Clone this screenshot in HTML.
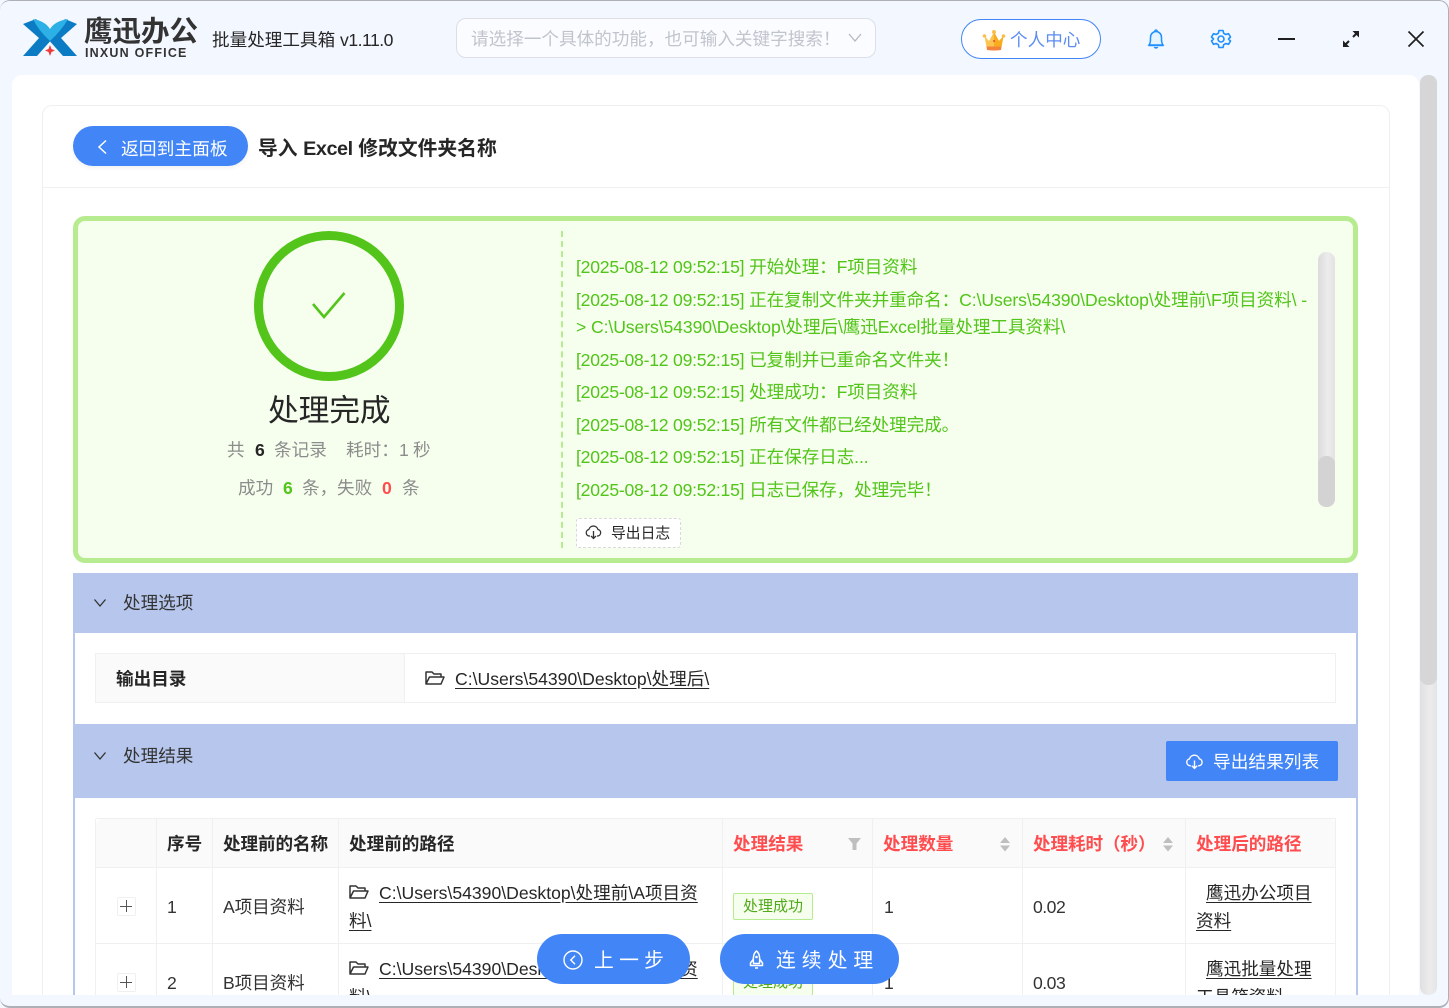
<!DOCTYPE html>
<html lang="zh-CN"><head><meta charset="utf-8"><title>鹰迅办公</title>
<style>
html,body{margin:0;padding:0;width:1449px;height:1008px;overflow:hidden;background:#f3f7ff}
body{position:relative;font-family:"Liberation Sans","Noto Sans CJK SC",sans-serif;font-size:17.6px;color:#333}
.a{position:absolute}
.t{position:absolute;white-space:nowrap;line-height:30px;height:30px}
.b{font-weight:700;color:#262626}
.r{font-weight:700;color:#ff4d4f}
.g{color:#52c41a}
.n{color:#8c8c8c}
.lg{letter-spacing:-.09px}
.lg i{font-style:normal;letter-spacing:-.23px}
.m{letter-spacing:-.5px}
u{text-underline-offset:3px}
.l{background:#f0f0f0}
</style></head><body>
<div class="a" style="left:0;top:0;width:1448px;height:1005px;border:solid #aeb0b5;border-width:1px 1px 2px 0;border-radius:10px;background:#f3f7ff"></div>

<svg class="a" style="left:20px;top:16px" width="60" height="44" viewBox="20 16 60 44">
<path d="M23 24 L36 19 L53 38 L37 56 L23 56 L39 38Z" fill="#0b7cc4"/>
<path d="M77 24 L65 19 L47 38 L63 56 L77 56 L61 38Z" fill="#0b7cc4"/>
<path d="M33 19 Q45 21 50 29 Q55 21 68 19 Q62 30 50 41 Q38 30 33 19Z" fill="#2cb0e6"/>
<path d="M50 45 L51.5 49 L55 50.500 L51.500 52 L50 56 L48.500 52 L45 50.500 L48.500 49Z" fill="#ee3b3b"/>
</svg>
<div class="t" style="left:84px;top:17px;font-size:28.500px;font-weight:700;color:#333">鹰迅办公</div>
<div class="t" style="left:85px;top:38px;font-size:12.500px;font-weight:700;color:#333;letter-spacing:1.200px">INXUN OFFICE</div>
<div class="t" style="left:212px;top:25px;color:#262626">批量处理工具箱 <span class="m">v1.11.0</span></div>

<div class="a" style="left:456px;top:18px;width:418px;height:38px;border:1px solid #dcdfe6;border-radius:10px;background:#fbfcff"></div>
<div class="t" style="left:471px;top:24px;font-size:17.600px;color:#c0c4cc">请选择一个具体的功能，也可输入关键字搜索！</div>
<svg class="a" style="left:847px;top:32px" width="16" height="12" viewBox="0 0 16 12"><path d="M2 2 L8 9 L14 2" fill="none" stroke="#b4b8c0" stroke-width="1.300"/></svg>

<div class="a" style="left:961px;top:19px;width:138px;height:38px;border:1px solid #4285f7;border-radius:20px;background:#fff"></div>
<svg class="a" style="left:982px;top:29px" width="24" height="22" viewBox="0 0 24 22">
<circle cx="12" cy="3" r="2" fill="#fbbf4d"/><circle cx="2.500" cy="7" r="1.800" fill="#fbbf4d"/><circle cx="21.500" cy="7" r="1.800" fill="#fbbf4d"/>
<path d="M2.500 7 L7 12 L12 3 L17 12 L21.500 7 L19.500 18 H4.500Z" fill="#fcc552"/><path d="M12 3 L17 12 L21.500 7 L19.500 18 H12Z" fill="#f9ad1e"/>
<path d="M4.500 17.500 H19.500 L19 21 Q12 22 5 21Z" fill="#f4823a"/><circle cx="12" cy="12" r="1" fill="#e04a3a"/></svg>
<div class="t" style="left:1010px;top:25px;color:#5b8df2">个人中心</div>
<svg class="a" style="left:1146px;top:28px" width="20" height="22" viewBox="0 0 20 22"><path d="M3 17 C4.500 15 4.500 13 4.500 9.500 C4.500 6 7 3.500 10 3.500 C13 3.500 15.500 6 15.500 9.500 C15.500 13 15.500 15 17 17Z" fill="#e6f4ff" stroke="#1e90ff" stroke-width="1.500"/><path d="M2.500 17.500 H17.500" stroke="#1e90ff" stroke-width="1.500"/><path d="M8.500 3 Q10 .8 11.500 3" fill="none" stroke="#1e90ff" stroke-width="1.300"/><path d="M8 19 Q10 21.500 12 19" fill="#1e90ff" stroke="#1e90ff"/></svg>
<svg class="a" style="left:1210px;top:28px" width="22" height="22" viewBox="0 0 22 22"><path d="M9 2.500 H13 L13.700 5.300 L15.800 6.500 L18.500 5.700 L20.500 9 L18.500 11 L20.500 13 L18.500 16.300 L15.800 15.500 L13.700 16.700 L13 19.500 H9 L8.300 16.700 L6.200 15.500 L3.500 16.300 L1.500 13 L3.500 11 L1.500 9 L3.500 5.700 L6.200 6.500 L8.300 5.300Z" fill="none" stroke="#1e90ff" stroke-width="1.600" stroke-linejoin="round"/><circle cx="11" cy="11" r="3" fill="none" stroke="#1e90ff" stroke-width="1.600"/></svg>
<div class="a" style="left:1278px;top:38px;width:17px;height:2px;background:#1f1f1f"></div>
<svg class="a" style="left:1342px;top:30px" width="18" height="18" viewBox="0 0 18 18"><path d="M3 15 L7 11 M11 7 L15 3" stroke="#1f1f1f" stroke-width="2"/><path d="M10.500 1 H17 V7.500Z M1 10.500 V17 H7.500Z" fill="#1f1f1f"/></svg>
<svg class="a" style="left:1407px;top:30px" width="18" height="18" viewBox="0 0 18 18"><path d="M1.500 1.500 L16.500 16.500 M16.500 1.500 L1.500 16.500" stroke="#1f1f1f" stroke-width="1.700"/></svg>

<div class="a" style="left:1420px;top:75px;width:17px;height:920px;border-radius:8px;background:linear-gradient(90deg,#e0e0e0,#ececec 60%,#e4e4e4)"></div>
<div class="a" style="left:1420px;top:75px;width:17px;height:610px;border-radius:8px;background:#d6d6d6"></div>

<div class="a" style="left:0;top:0;width:1449px;height:995px;overflow:hidden">
<div class="a" style="left:12px;top:75px;width:1407px;height:940px;background:#fff;border-radius:10px"></div>
<div class="a" style="left:42px;top:105px;width:1346px;height:920px;border:1px solid #efefef;border-radius:10px"></div>
<div class="a l" style="left:43px;top:187px;width:1346px;height:1px"></div>

<div class="a" style="left:73px;top:126px;width:175px;height:40px;border-radius:20px;background:#4285f7;box-shadow:0 2px 4px rgba(0,0,0,.06)"></div>
<svg class="a" style="left:96px;top:139px" width="14" height="16" viewBox="0 0 14 16"><path d="M10 1.500 L3 8 L10 14.500" fill="none" stroke="#fff" stroke-width="1.500"/></svg>
<div class="t" style="left:121px;top:134px;color:#fff;font-size:17.800px">返回到主面板</div>
<div class="t" style="left:258px;top:134px;font-size:19.800px;font-weight:700;color:#262626">导入 <span style="letter-spacing:-.4px">Excel</span> 修改文件夹名称</div>

<div class="a" style="left:73px;top:216px;width:1275px;height:337px;border:5px solid #b7eb8f;border-radius:12px;background:#f6ffed"></div>
<svg class="a" style="left:250px;top:227px" width="158" height="158" viewBox="0 0 158 158"><circle cx="79" cy="79" r="70.500" fill="none" stroke="#52c41a" stroke-width="9"/><path d="M63 77 L74 90 L94.500 66" fill="none" stroke="#52c41a" stroke-width="2.600"/></svg>
<div class="t" style="left:268px;top:396px;font-size:30.800px;color:#262626;letter-spacing:-.2px">处理完成</div>
<div class="t n" style="left:227px;top:435px">共</div><div class="t b" style="left:255px;top:435px;font-weight:700">6</div><div class="t n" style="left:274px;top:435px">条记录</div><div class="t n" style="left:346px;top:435px">耗时：</div><div class="t n" style="left:399px;top:435px">1</div><div class="t n" style="left:413px;top:435px">秒</div>
<div class="t n" style="left:238px;top:473px">成功</div><div class="t g" style="left:283px;top:473px;font-weight:700">6</div><div class="t n" style="left:302px;top:473px">条，</div><div class="t n" style="left:337px;top:473px">失败</div><div class="t" style="left:382px;top:473px;font-weight:700;color:#ff4d4f">0</div><div class="t n" style="left:402px;top:473px">条</div>

<div class="a" style="left:561px;top:231px;width:0;height:317px;border-left:2px dashed #b7eb8f"></div>
<div class="t g lg" style="left:576px;top:252px"><i>[2025-08-12 09:52:15]</i> 开始处理：F项目资料</div>
<div class="t g lg" style="left:576px;top:285px"><i>[2025-08-12 09:52:15]</i> 正在复制文件夹并重命名：C:\Users\54390\Desktop\处理前\F项目资料\ -</div>
<div class="t g lg" style="left:576px;top:312px">&gt; C:\Users\54390\Desktop\处理后\鹰迅Excel批量处理工具资料\</div>
<div class="t g lg" style="left:576px;top:345px"><i>[2025-08-12 09:52:15]</i> 已复制并已重命名文件夹！</div>
<div class="t g lg" style="left:576px;top:377px"><i>[2025-08-12 09:52:15]</i> 处理成功：F项目资料</div>
<div class="t g lg" style="left:576px;top:410px"><i>[2025-08-12 09:52:15]</i> 所有文件都已经处理完成。</div>
<div class="t g lg" style="left:576px;top:442px"><i>[2025-08-12 09:52:15]</i> 正在保存日志...</div>
<div class="t g lg" style="left:576px;top:475px"><i>[2025-08-12 09:52:15]</i> 日志已保存，处理完毕！</div>
<div class="a" style="left:576px;top:518px;width:103px;height:28px;border:1px dashed #d9d9d9;border-radius:3px;background:#fff"></div>
<svg class="a" style="left:585px;top:524px" width="17" height="16" viewBox="0 0 17 16"><path d="M5 12 H4.200 A3.300 3.300 0 0 1 3.800 5.500 A4.800 4.800 0 0 1 13 5.500 A3.300 3.300 0 0 1 12.800 12 H12" fill="none" stroke="#333" stroke-width="1.300"/><path d="M8.500 7 V14.500 M6 12 L8.500 14.500 L11 12" fill="none" stroke="#333" stroke-width="1.300"/></svg>
<div class="t" style="left:611px;top:519px;font-size:14.800px;color:#262626">导出日志</div>
<div class="a" style="left:1318px;top:252px;width:17px;height:255px;border-radius:8px;background:linear-gradient(90deg,#dcdcdc,#ececec 60%,#e2e2e2)"></div>
<div class="a" style="left:1318px;top:456px;width:17px;height:51px;border-radius:8px;background:#d3d3d3"></div>

<div class="a" style="left:73px;top:573px;width:1285px;height:430px;box-sizing:border-box;border:solid #b6c6ec;border-width:0 2px"></div>
<div class="a" style="left:73px;top:573px;width:1285px;height:60px;background:#b6c6ec"></div>
<svg class="a" style="left:93px;top:597px" width="14" height="12" viewBox="0 0 14 12"><path d="M1.500 2.500 L7 9 L12.500 2.500" fill="none" stroke="#333" stroke-width="1.300"/></svg>
<div class="t" style="left:123px;top:588px;color:#333">处理选项</div>

<div class="a" style="left:95px;top:653px;width:1239px;height:48px;border:1px solid #f0f0f0"></div>
<div class="a" style="left:96px;top:654px;width:308px;height:48px;background:#fafafa;border-right:1px solid #f0f0f0"></div>
<div class="t b" style="left:116px;top:664px">输出目录</div>
<svg class="a" style="left:424px;top:669px" width="22" height="18" viewBox="0 0 22 18"><path d="M2 15 V3 H8 L10 5 H17 V8 M2 15 L5.500 8 H20 L17 15Z" fill="none" stroke="#333" stroke-width="1.500" stroke-linejoin="round"/></svg>
<div class="t" style="left:455px;top:664px;color:#262626"><u>C:\Users\54390\Desktop\处理后\</u></div>

<div class="a" style="left:73px;top:724px;width:1285px;height:74px;background:#b6c6ec"></div>
<svg class="a" style="left:93px;top:750px" width="14" height="12" viewBox="0 0 14 12"><path d="M1.500 2.500 L7 9 L12.500 2.500" fill="none" stroke="#333" stroke-width="1.300"/></svg>
<div class="t" style="left:123px;top:741px;color:#333">处理结果</div>
<div class="a" style="left:1166px;top:741px;width:172px;height:40px;background:#4285f7;border-radius:2px"></div>
<svg class="a" style="left:1185px;top:753px" width="19" height="17" viewBox="0 0 17 16"><path d="M5 12 H4.200 A3.300 3.300 0 0 1 3.800 5.500 A4.800 4.800 0 0 1 13 5.500 A3.300 3.300 0 0 1 12.800 12 H12" fill="none" stroke="#fff" stroke-width="1.300"/><path d="M8.500 7 V14.500 M6 12 L8.500 14.500 L11 12" fill="none" stroke="#fff" stroke-width="1.300"/></svg>
<div class="t" style="left:1213px;top:747px;color:#fff;font-size:17.700px">导出结果列表</div>

<div class="a" style="left:96px;top:819px;width:1240px;height:48px;background:#fafafa;border-radius:6px 6px 0 0"></div>
<div class="a l" style="left:96px;top:818px;width:1240px;height:1px"></div>
<div class="a l" style="left:96px;top:867px;width:1240px;height:1px"></div>
<div class="a l" style="left:96px;top:943px;width:1240px;height:1px"></div>
<div class="a l" style="left:95px;top:819px;width:1px;height:180px"></div>
<div class="a l" style="left:156px;top:819px;width:1px;height:180px"></div>
<div class="a l" style="left:212px;top:819px;width:1px;height:180px"></div>
<div class="a l" style="left:338px;top:819px;width:1px;height:180px"></div>
<div class="a l" style="left:722px;top:819px;width:1px;height:180px"></div>
<div class="a l" style="left:872px;top:819px;width:1px;height:180px"></div>
<div class="a l" style="left:1022px;top:819px;width:1px;height:180px"></div>
<div class="a l" style="left:1185px;top:819px;width:1px;height:180px"></div>
<div class="a l" style="left:1335px;top:819px;width:1px;height:180px"></div>

<div class="t b" style="left:167px;top:829px">序号</div>
<div class="t b" style="left:223px;top:829px;letter-spacing:-.1px">处理前的名称</div>
<div class="t b" style="left:349px;top:829px">处理前的路径</div>
<div class="t r" style="left:733px;top:829px">处理结果</div>
<div class="t r" style="left:883px;top:829px">处理数量</div>
<div class="t r" style="left:1033px;top:829px;letter-spacing:-.1px">处理耗时（秒）</div>
<div class="t r" style="left:1196px;top:829px">处理后的路径</div>
<svg class="a" style="left:847px;top:837px" width="15" height="14" viewBox="0 0 15 14"><path d="M1 1 H14 L9.500 6.500 V13 H5.500 V6.500Z" fill="#bfbfbf"/></svg>
<svg class="a" style="left:998px;top:836px" width="14" height="16" viewBox="0 0 14 16"><path d="M7 1 L12 7 H2Z M2 9.500 H12 L7 15.500Z" fill="#bfbfbf"/></svg>
<svg class="a" style="left:1161px;top:836px" width="14" height="16" viewBox="0 0 14 16"><path d="M7 1 L12 7 H2Z M2 9.500 H12 L7 15.500Z" fill="#bfbfbf"/></svg>

<div class="a" style="left:117px;top:897px;width:17px;height:17px;border:1px solid #f0f0f0;border-radius:2px;background:#fff"></div>
<div class="a" style="left:120px;top:906px;width:12px;height:1px;background:#555"></div><div class="a" style="left:126px;top:900px;width:1px;height:12px;background:#555"></div>
<div class="t" style="left:167px;top:892px">1</div>
<div class="t" style="left:223px;top:892px;letter-spacing:-.1px">A项目资料</div>
<svg class="a" style="left:348px;top:883px" width="22" height="18" viewBox="0 0 22 18"><path d="M2 15 V3 H8 L10 5 H17 V8 M2 15 L5.500 8 H20 L17 15Z" fill="none" stroke="#333" stroke-width="1.500" stroke-linejoin="round"/></svg>
<div class="t" style="left:379px;top:878px;color:#262626"><u>C:\Users\54390\Desktop\处理前\A项目资</u></div>
<div class="t" style="left:349px;top:906px;color:#262626"><u>料\</u></div>
<div class="a" style="left:733px;top:893px;width:78px;height:25px;border:1px solid #b7eb8f;border-radius:2px;background:#f6ffed"></div>
<div class="t" style="left:743px;top:892px;font-size:15px;color:#52a81a">处理成功</div>
<div class="t" style="left:884px;top:892px">1</div>
<div class="t m" style="left:1033px;top:892px">0.02</div>
<div class="t" style="left:1206px;top:878px;color:#262626"><u>鹰迅办公项目</u></div>
<div class="t" style="left:1196px;top:906px;color:#262626"><u>资料</u></div>

<div class="a" style="left:117px;top:973px;width:17px;height:17px;border:1px solid #f0f0f0;border-radius:2px;background:#fff"></div>
<div class="a" style="left:120px;top:982px;width:12px;height:1px;background:#555"></div><div class="a" style="left:126px;top:976px;width:1px;height:12px;background:#555"></div>
<div class="t" style="left:167px;top:968px">2</div>
<div class="t" style="left:223px;top:968px;letter-spacing:-.1px">B项目资料</div>
<svg class="a" style="left:348px;top:959px" width="22" height="18" viewBox="0 0 22 18"><path d="M2 15 V3 H8 L10 5 H17 V8 M2 15 L5.500 8 H20 L17 15Z" fill="none" stroke="#333" stroke-width="1.500" stroke-linejoin="round"/></svg>
<div class="t" style="left:379px;top:954px;color:#262626"><u>C:\Users\54390\Desktop\处理前\B项目资</u></div>
<div class="t" style="left:349px;top:982px;color:#262626"><u>料\</u></div>
<div class="a" style="left:733px;top:969px;width:78px;height:25px;border:1px solid #b7eb8f;border-radius:2px;background:#f6ffed"></div>
<div class="t" style="left:743px;top:968px;font-size:15px;color:#52a81a">处理成功</div>
<div class="t" style="left:884px;top:968px">1</div>
<div class="t m" style="left:1033px;top:968px">0.03</div>
<div class="t" style="left:1206px;top:954px;color:#262626"><u>鹰迅批量处理</u></div>
<div class="t" style="left:1196px;top:982px;color:#262626"><u>工具箱资料</u></div>
</div>

<div class="a" style="left:537px;top:934px;width:153px;height:50px;border-radius:25px;background:#4285f7"></div>
<svg class="a" style="left:562px;top:949px" width="22" height="22" viewBox="0 0 22 22"><circle cx="11" cy="11" r="9" fill="none" stroke="#fff" stroke-width="1.400"/><path d="M13 6.800 L8.800 11 L13 15.200" fill="none" stroke="#fff" stroke-width="1.400"/></svg>
<div class="t" style="left:594px;top:946px;color:#fff;font-size:19.800px;letter-spacing:5.300px">上一步</div>
<div class="a" style="left:720px;top:934px;width:179px;height:50px;border-radius:25px;background:#4285f7"></div>
<svg class="a" style="left:747px;top:949px" width="19" height="22" viewBox="0 0 19 22"><path d="M9.500 2 C12.500 4.500 13 8 12.500 14.500 H6.500 C6 8 6.500 4.500 9.500 2Z" fill="none" stroke="#fff" stroke-width="1.500" stroke-linejoin="round"/><path d="M6.500 10 L3.500 14 V16.500 H15.500 V14 L12.500 10" fill="none" stroke="#fff" stroke-width="1.500" stroke-linejoin="round"/><circle cx="9.500" cy="8" r="1.300" fill="#fff"/><path d="M8 19 H11" stroke="#fff" stroke-width="1.500"/></svg>
<div class="t" style="left:776px;top:946px;color:#fff;font-size:19.800px;letter-spacing:6px">连续处理</div>
</body></html>
